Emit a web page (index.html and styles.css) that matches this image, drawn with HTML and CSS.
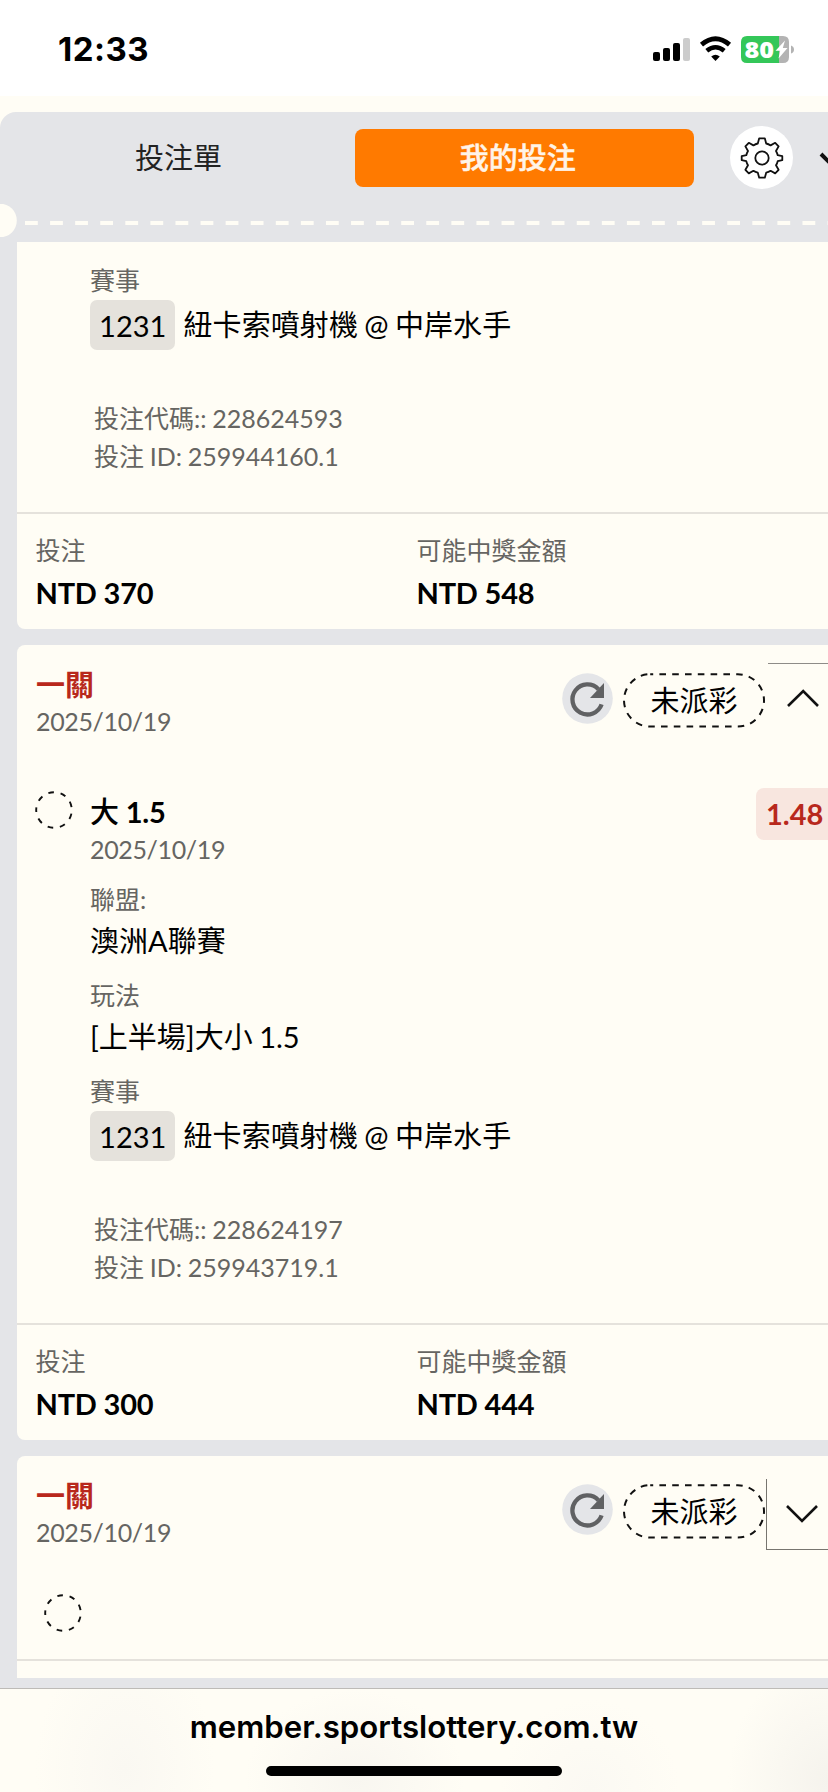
FILE: index.html
```html
<!DOCTYPE html>
<html lang="zh-Hant">
<head>
<meta charset="utf-8">
<title>我的投注</title>
<link rel="stylesheet" href="styles.css">
</head>
<body>
<svg class="defs" width="0" height="0">
  <symbol id="refresh" viewBox="0 0 51 51">
    <circle cx="25.5" cy="25.5" r="25.3" fill="#e4e5e8"/>
    <path d="M39.6 31.4A15 15 0 1 1 36.4 16.2" fill="none" stroke="#606163" stroke-width="4.3"/>
    <path d="M42 10V25H28z" fill="#606163"/>
  </symbol>
  <symbol id="ring" viewBox="0 0 38 38">
    <circle cx="19" cy="19" r="17.8" fill="none" stroke="#111" stroke-width="1.9" stroke-dasharray="5.6 6.825" stroke-dashoffset="2.8" transform="rotate(180 19 19)"/>
  </symbol>
  <symbol id="pill" viewBox="0 0 142 55">
    <rect x="1" y="1.2" width="140" height="52.4" rx="26.2" fill="none" stroke="#111" stroke-width="2" stroke-dasharray="6.6 6.2" stroke-dashoffset="3.600"/>
  </symbol>
</svg>

<header class="status">
  <span class="time">12:33</span>
  <svg class="indicators" width="142" height="28" viewBox="0 0 142 28">
    <rect x="0" y="16" width="7" height="9" rx="2"/>
    <rect x="10" y="12" width="7" height="13" rx="2"/>
    <rect x="20" y="7" width="7" height="18" rx="2"/>
    <rect x="30" y="2" width="7" height="23" rx="2" fill="#ccc"/>
    <path d="M48.5 8.6Q62.5 -3.2 76.5 8.6" fill="none" stroke="#000" stroke-width="4.8"/>
    <path d="M53.8 14.7Q62.5 7.8 71.2 14.7" fill="none" stroke="#000" stroke-width="4.6"/>
    <path d="M62.5 25L58.2 20.6Q62.5 17 66.8 20.6z"/>
    <path d="M94 0H126V27H94Q88 27 88 21V6Q88 0 94 0z" fill="#34c759"/>
    <path d="M126 0H130Q136 0 136 6V21Q136 27 130 27H126z" fill="#b3b3b3"/>
    <path d="M138 9.5Q141 10.5 141 13.5T138 17.500z" fill="#b3b3b3"/>
    <text class="charge" x="91.500" y="22" textLength="29.500" lengthAdjust="spacingAndGlyphs">80</text>
    <path d="M132 4.500L122.500 14.800H127.200L125.500 22.500L134.500 12H129.800z" fill="#fff"/>
  </svg>
</header>

<main class="panel">
  <nav class="tabs">
    <span class="tab">投注單</span>
    <span class="tab tab-active">我的投注</span>
    <span class="gear">
      <svg width="44" height="44" viewBox="0 0 44 44" fill="none" stroke="#111" stroke-width="1.8" stroke-linejoin="round">
        <circle cx="22" cy="22" r="6.700"/>
        <path d="M19.2 2.300H24.800L26.200 7.500Q28.500 8 30.600 9.400L35.200 6.800L38.600 10.400L36 15Q37.200 17 37.700 19.200L42.300 20.200V24.200L37.700 25.200Q37.200 27.300 36 29.300L38.600 33.800L35.200 37.400L30.600 34.800Q28.500 36.200 26.200 36.700L24.800 41.700H19.200L17.800 36.700Q15.500 36.200 13.400 34.800L8.800 37.400L5.400 33.800L8 29.300Q6.800 27.300 6.300 25.200L1.700 24.200V20.200L6.300 19.200Q6.800 17 8 15L5.400 10.400L8.800 6.800L13.400 9.400Q15.500 8 17.800 7.500z"/>
      </svg>
    </span>
    <svg class="collapse" width="30" height="18" viewBox="0 0 30 18" fill="none" stroke="#111" stroke-width="4"><path d="M2 2L15 15L28 2"/></svg>
  </nav>
  <div class="perforation"><svg width="828" height="33"><circle cx="0" cy="16.500" r="16.800" fill="#fffdf5"/><path d="M25 19H840" stroke="#fffdf5" stroke-width="4" stroke-dasharray="12.800 12.280"/></svg></div>

  <section class="card card-first">
    <div class="details">
      <p class="label">賽事</p>
      <p class="match"><span class="code">1231</span><span class="teams">紐卡索噴射機 @ 中岸水手</span></p>
      <div class="ids"><p>投注代碼:: 228624593</p><p>投注 ID: 259944160.1</p></div>
    </div>
    <footer class="totals">
      <div><p class="label">投注</p><p class="amount">NTD 370</p></div>
      <div><p class="label">可能中獎金額</p><p class="amount">NTD 548</p></div>
    </footer>
  </section>

  <section class="card">
    <div class="head">
      <div class="title"><p class="level">一關</p><p class="date">2025/10/19</p></div>
      <svg class="refresh"><use href="#refresh"/></svg>
      <span class="pill"><svg class="outline"><use href="#pill"/></svg><span>未派彩</span></span>
      <span class="toggle toggle-open"><svg width="32" height="18" viewBox="0 0 32 18"><path d="M1 17L16.200 2L31 17"/></svg></span>
    </div>
    <div class="pick">
      <svg class="ring"><use href="#ring"/></svg>
      <div class="pick-name"><p class="choice"><span class="side">大</span> 1.5</p><p class="date">2025/10/19</p></div>
      <span class="odds">1.48</span>
    </div>
    <div class="details">
      <div class="field"><p class="label">聯盟:</p><p class="value">澳洲A聯賽</p></div>
      <div class="field"><p class="label">玩法</p><p class="value">[上半場]大小 1.5</p></div>
      <p class="label">賽事</p>
      <p class="match"><span class="code">1231</span><span class="teams">紐卡索噴射機 @ 中岸水手</span></p>
      <div class="ids"><p>投注代碼:: 228624197</p><p>投注 ID: 259943719.1</p></div>
    </div>
    <footer class="totals">
      <div><p class="label">投注</p><p class="amount">NTD 300</p></div>
      <div><p class="label">可能中獎金額</p><p class="amount">NTD 444</p></div>
    </footer>
  </section>

  <section class="card card-last">
    <div class="head">
      <div class="title"><p class="level">一關</p><p class="date">2025/10/19</p></div>
      <svg class="refresh"><use href="#refresh"/></svg>
      <span class="pill"><svg class="outline"><use href="#pill"/></svg><span>未派彩</span></span>
      <span class="toggle toggle-closed"><svg width="32" height="18" viewBox="0 0 32 18"><path d="M1 1L16 16L31 1"/></svg></span>
    </div>
    <div class="summary"><svg class="ring"><use href="#ring"/></svg></div>
  </section>
</main>

<footer class="browser">
  <span class="address">member.sportslottery.com.tw</span>
  <span class="home"></span>
</footer>
</body>
</html>
```
FILE: styles.css
```css
* { box-sizing: border-box; }
body {
  margin: 0;
  width: 828px;
  height: 1792px;
  overflow: hidden;
  display: flex;
  flex-direction: column;
  background: #fffdf5;
  font-family: Lato, "Noto Sans CJK TC", sans-serif;
  color: #000;
  white-space: nowrap;
}
p { margin: 0; }
svg { display: block; flex: none; }
.defs { position: absolute; }

.status {
  height: 96px;
  flex: none;
  padding: 0 33px 0 58px;
  display: flex;
  justify-content: space-between;
  background: #fff;
}
.time {
  font: 700 33px/99px Inter, sans-serif;
  letter-spacing: .5px;
}
.indicators { margin-top: 36px; overflow: visible; }
.charge { font: 800 23.500px "Open Sans", sans-serif; fill: #fff; }

.panel {
  margin-top: 16px;
  height: 1576px;
  flex: none;
  overflow: hidden;
  background: #e4e5e8;
  border-radius: 16px 0 0 0;
}
.tabs {
  height: 92px;
  padding-top: 14px;
  display: flex;
}
.tab {
  height: 59px;
  width: 355px;
  flex: none;
  margin-top: 3px;
  padding-left: 2px;
  text-align: center;
  font-size: 29px;
  line-height: 58px;
  color: #222;
}
.tab-active {
  width: 338.500px;
  height: 58px;
  padding: 0 13px 0 0;
  background: #ff7a00;
  border-radius: 8px;
  color: #fff4e8;
  font-weight: 500;
  -webkit-text-stroke: .5px #fff4e8;
}
.gear {
  width: 63px;
  height: 63px;
  flex: none;
  margin: 0 26px 0 36.500px;
  padding-left: 1px;
  display: grid;
  place-items: center;
  border-radius: 50%;
  background: #fff;
}
.collapse { margin-top: 26px; }
.perforation { height: 38px; }

.card {
  margin: 0 0 16px 17px;
  background: #fffdf5;
  border-radius: 8px 0 0 8px;
}
.card-first { border-top-left-radius: 0; padding-top: 20px; }
.card-last { height: 222px; border-bottom-left-radius: 0; margin-bottom: 10px; }
.details { padding: 0 0 36px 73px; }
.label, .ids, .date {
  font-size: 25px;
  line-height: 38px;
  color: #666562;
}
.label { height: 38px; line-height: 37px; }
.date { line-height: 35px; letter-spacing: -.35px; }
.match {
  display: flex;
  align-items: center;
  gap: 9px;
  height: 50px;
  font-size: 29px;
}
.code {
  width: 84.500px;
  height: 50px;
  padding-left: 1px;
  line-height: 52px;
  text-align: center;
  border-radius: 7px;
  background: #e5e2dc;
}
.teams { line-height: 52px; word-spacing: -1.200px; letter-spacing: .08px; }
.ids { padding: 49px 0 1px 4px; word-spacing: -.6px; }
.totals {
  display: grid;
  grid-template-columns: 381px 1fr;
  border-top: 2px solid #e5e2dc;
  padding: 18px 0 15px 18.500px;
}
.amount { margin-top: 2px; font-size: 29px; font-weight: 700; line-height: 41px; height: 42px; letter-spacing: -.2px; }

.head {
  height: 138px;
  display: flex;
}
.title { width: 545px; flex: none; padding: 21px 0 0 19px; }
.level { font-size: 29px; line-height: 38px; font-weight: 700; color: #b8281c; }
.refresh { width: 51px; height: 51px; margin-top: 28px; }
.pill {
  position: relative;
  width: 142px;
  height: 55px;
  flex: none;
  margin: 28px 0 0 10px;
  text-align: center;
  font-size: 29px;
  line-height: 55px;
}
.outline { position: absolute; inset: 0; width: 142px; height: 55px; }
.toggle {
  width: 80px;
  height: 71px;
  flex: none;
  padding: 26px 0 0 19px;
}
.toggle path { fill: none; stroke: #111; stroke-width: 2.600; }
.toggle-open { margin: 18px 0 0 3px; padding-top: 25px; border-top: 1px solid #8e8c88; }
.toggle-closed { margin: 23px 0 0 1px; border: 1px solid #77756f; border-width: 0 0 1px 1px; }

.pick {
  height: 98px;
  padding-left: 18px;
  display: flex;
}
.ring { width: 38px; height: 38px; margin-top: 8px; }
.pick-name { width: 683px; flex: none; padding: 10px 0 0 17px; }
.choice { font-size: 29px; font-weight: 700; line-height: 38px; height: 39px; letter-spacing: -.2px; }
.side { font-weight: 500; }
.odds {
  width: 90px;
  height: 52px;
  flex: none;
  margin-top: 4.500px;
  padding-left: 10px;
  border-radius: 8px;
  background: #f8e6df;
  color: #b8281c;
  font-size: 29px;
  font-weight: 700;
  line-height: 52px;
}
.field { height: 96px; }
.value { margin-top: 2px; font-size: 29px; line-height: 39px; word-spacing: -1px; }
.summary {
  height: 67px;
  padding-left: 26.500px;
  border-bottom: 2px solid #e5e2dc;
}
.summary .ring { margin-top: 0; }

.browser {
  height: 104px;
  border-top: 1px solid #bdbbb7;
  display: flex;
  flex-direction: column;
  align-items: center;
  background: radial-gradient(ellipse 90px 130px at 125px 80px, #faf8f2, #faf8f200),
    radial-gradient(ellipse 110px 90px at 355px 90px, #f8f6f0, #f8f6f000),
    radial-gradient(ellipse 90px 90px at 590px 100px, #fbf9f3, #fbf9f300),
    radial-gradient(ellipse 100px 120px at 828px 90px, #f5f3ed, #f5f3ed00), #fffdf5;
}
.address { font: 600 31.200px/76px Inter, sans-serif; }
.home { width: 296px; height: 10px; margin-top: 1px; border-radius: 5px; background: #000; }
```
